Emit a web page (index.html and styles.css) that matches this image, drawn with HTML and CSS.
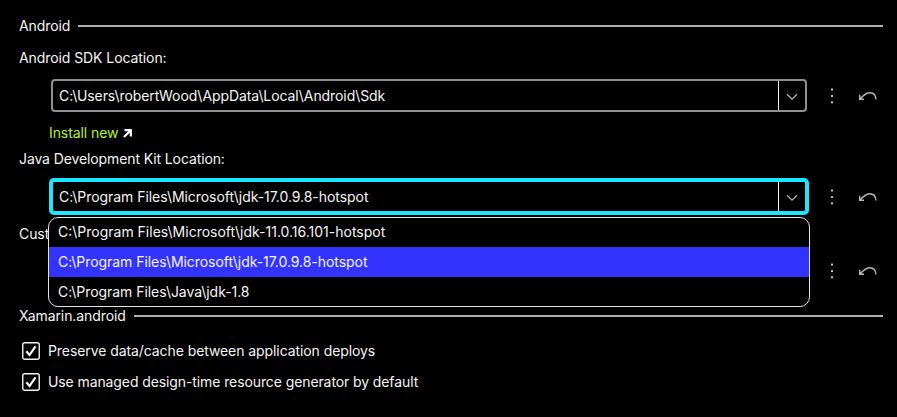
FILE: index.html
```
<!DOCTYPE html>
<html lang="en">
<head>
<meta charset="utf-8">
<title>Android</title>
<link rel="stylesheet" href="styles.css">
</head>
<body>
<svg width="0" height="0" class="defs">
  <symbol id="chevron" viewBox="0 0 12 8"><path d="M1 1.200L6 6.200L11 1.200" fill="none" stroke="#b5b5b5" stroke-width="1.300"/></symbol>
  <symbol id="dots" viewBox="0 0 4 16"><g fill="#d6d6d6"><rect x="1" y=".5" width="2" height="2" rx=".4"/><rect x="1" y="7" width="2" height="2" rx=".4"/><rect x="1" y="13.300" width="2" height="2" rx=".4"/></g></symbol>
  <symbol id="undo" viewBox="0 0 20 10"><path d="M1.700 3.800V8.300H6M2 8C5.500 4 8 1.900 11.300 1.700C15.300 1.500 17.700 4 18 8.500" fill="none" stroke="#b5b5b5" stroke-width="1.400"/></symbol>
  <symbol id="check" viewBox="0 0 18 18"><rect x=".75" y=".75" width="16.500" height="16.500" rx="2" fill="none" stroke="#f2f2f2" stroke-width="1.400"/><path d="M4.300 9.300L7.500 13L13.500 4.300" fill="none" stroke="#fff" stroke-width="2.200"/></symbol>
</svg>
<main class="settings">
  <h2 class="group">Android</h2>
  <div class="label sdk-label">Android SDK Location:</div>
  <div class="row sdk-row">
    <div class="combo"><span class="value">C:\Users\robertWood\AppData\Local\Android\Sdk</span><span class="toggle"><svg width="12" height="8"><use href="#chevron"/></svg></span></div>
    <svg class="dots" width="4" height="16"><use href="#dots"/></svg>
    <svg class="undo" width="20" height="10"><use href="#undo"/></svg>
  </div>
  <a class="link">Install new <svg width="9" height="9" viewBox="0 0 9 9"><path d="M1.500 1.200H7.800V7.500M7.200 1.800L1 8" fill="none" stroke="#fff" stroke-width="2.200"/></svg></a>
  <div class="label jdk-label">Java Development Kit Location:</div>
  <div class="row jdk-row">
    <div class="combo focused"><span class="value">C:\Program Files\Microsoft\jdk-17.0.9.8-hotspot</span><span class="toggle"><svg width="12" height="8"><use href="#chevron"/></svg></span></div>
    <svg class="dots" width="4" height="16"><use href="#dots"/></svg>
    <svg class="undo" width="20" height="10"><use href="#undo"/></svg>
    <ul class="menu">
      <li>C:\Program Files\Microsoft\jdk-11.0.16.101-hotspot</li>
      <li class="selected">C:\Program Files\Microsoft\jdk-17.0.9.8-hotspot</li>
      <li>C:\Program Files\Java\jdk-1.8</li>
    </ul>
  </div>
  <div class="label custom-label">Cust</div>
  <div class="row custom-row">
    <svg class="dots" width="4" height="16"><use href="#dots"/></svg>
    <svg class="undo" width="20" height="10"><use href="#undo"/></svg>
  </div>
  <h2 class="group xamarin">Xamarin.android</h2>
  <div class="option"><svg width="18" height="18"><use href="#check"/></svg>Preserve data/cache between application deploys</div>
  <div class="option managed"><svg width="18" height="18"><use href="#check"/></svg>Use managed design-time resource generator by default</div>
</main>
</body>
</html>
```
FILE: styles.css
```
* { box-sizing: border-box; }
body {
  margin: 0;
  background: #000;
  color: #f5f5f5;
  font: 14px/20px Inter, "Liberation Sans", sans-serif;
  letter-spacing: -0.08px;
}
svg { display: block; flex: none; }
.defs { position: absolute; }
.settings {
  height: 417px;
  padding: 16px 14px 0 19px;
  overflow: hidden;
}
.group {
  display: flex;
  align-items: center;
  gap: 8px;
  height: 20px;
  margin: 0;
  font-size: 14px;
  font-weight: 400;
}
.group::after {
  content: "";
  flex: 1;
  height: 2px;
  background: #b0b0b0;
}
.label { height: 20px; }
.sdk-label { margin-top: 12px; }
.row {
  position: relative;
  display: flex;
  align-items: center;
  justify-content: flex-end;
  padding-right: 5px;
}
.sdk-row { height: 33px; margin-top: 11px; }
.jdk-row { height: 37px; margin-top: 9px; }
.custom-row { height: 20px; margin-top: 17px; }
.combo {
  display: flex;
  width: 756px;
  height: 33px;
  margin-right: 23px;
  border: 2px solid #909090;
  border-radius: 4px;
}
.combo.focused {
  width: 760px;
  height: 37px;
  margin-right: 21px;
  border: 4px solid #1ae6ff;
  border-radius: 5px;
}
.value { flex: 1; padding-left: 6px; line-height: 30px; }
.focused .value { line-height: 30px; letter-spacing: -0.05px; }
.toggle {
  display: flex;
  align-items: center;
  justify-content: center;
  width: 27px;
  padding-top: 2px;
  border-left: 1px solid #f0f0f0;
}
.undo { margin-left: 24px; }
.link {
  display: flex;
  align-items: center;
  gap: 5px;
  height: 20px;
  margin: 11px 0 0 30px;
  color: #b8f02c;
}
.link svg { margin-top: 1px; }
.jdk-label { margin-top: 6px; letter-spacing: -0.11px; }
.menu {
  position: absolute;
  z-index: 1;
  top: 39px;
  left: 29px;
  width: 762px;
  height: 90px;
  margin: 0;
  padding: 0;
  overflow: hidden;
  list-style: none;
  background: #000;
  border: 1px solid #e6e6e6;
  border-radius: 10px;
  letter-spacing: -0.05px;
}
.menu li { height: 30px; padding-left: 9px; line-height: 30px; }
.menu li:first-child { height: 29px; line-height: 28px; letter-spacing: 0; }
.menu .selected { background: #3333ff; }
.custom-label { margin-top: 9px; }
.xamarin { margin-top: 25px; }
.option {
  display: flex;
  align-items: center;
  gap: 8px;
  height: 20px;
  margin: 15px 0 11px 3px;
}
.managed { margin-top: 0; letter-spacing: -0.1px; }
```
